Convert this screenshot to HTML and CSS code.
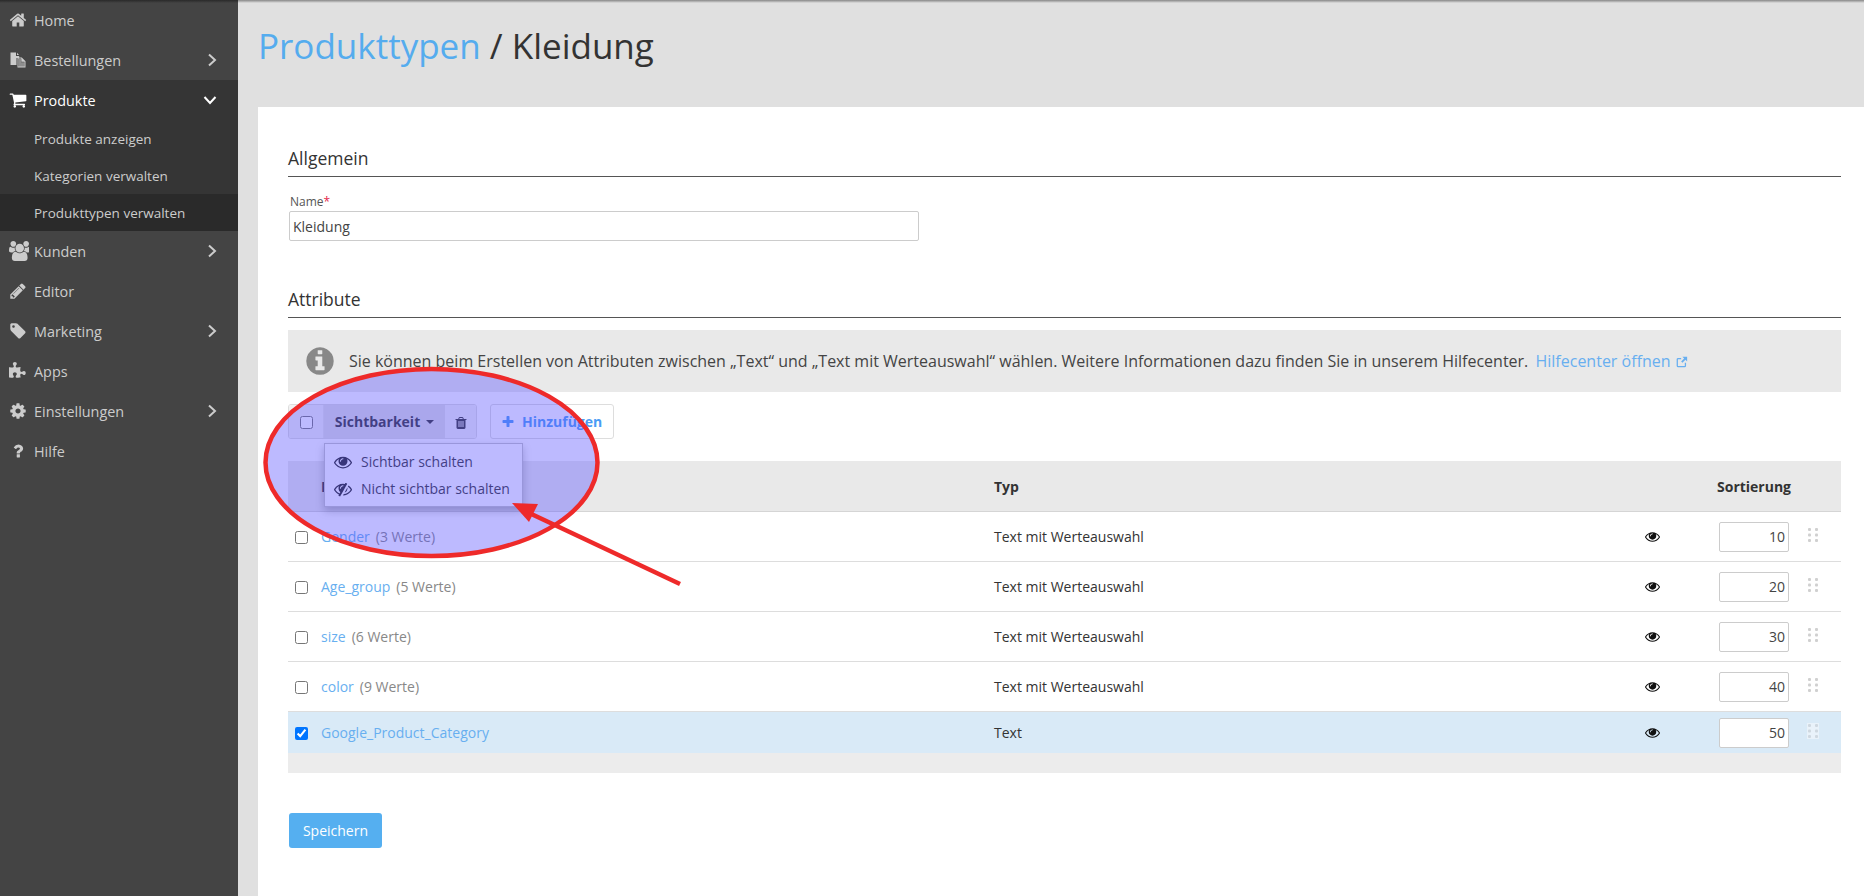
FILE: index.html
```html
<!DOCTYPE html>
<html lang="de">
<head>
<meta charset="utf-8">
<title>Produkttypen / Kleidung</title>
<link rel="stylesheet" href="styles.css">
</head>
<body>
<svg class="defs" width="0" height="0" aria-hidden="true">
  <symbol id="i-home" viewBox="0 0 1792 1792"><path d="M1472 992v480q0 26-19 45t-45 19h-384v-384h-256v384h-384q-26 0-45-19t-19-45v-480q0-1 .5-3t.5-3l575-474 575 474q1 2 1 6zm223-69l-62 74q-8 9-21 11h-3q-13 0-21-7l-692-577-692 577q-12 8-24 7-13-2-21-11l-62-74q-8-10-7-23.5t11-21.5l719-599q32-26 76-26t76 26l244 204v-195q0-14 9-23t23-9h192q14 0 23 9t9 23v408l219 182q10 8 11 21.5t-7 23.5z"/></symbol>
  <symbol id="i-files" viewBox="0 0 18 18"><path d="M1.500 1.500h5.500v3.500h3.200v2H7.500v7h-6z"/><path d="M8 1.800l2 2.300H8z"/><path fill-rule="evenodd" d="M8.500 6.500h4.300l3.700 3.700v6.300h-8zm1 1v8h6v-4.800h-3.200V7.500z"/><path d="M10 8h2v3.200h3.500V16H10z" opacity=".55"/></symbol>
  <symbol id="i-cart" viewBox="0 0 1792 1792"><path d="M704 1536q0 52-38 90t-90 38-90-38-38-90 38-90 90-38 90 38 38 90zm896 0q0 52-38 90t-90 38-90-38-38-90 38-90 90-38 90 38 38 90zm128-1088v512q0 24-16.5 42.5t-40.5 21.5l-1044 122q13 60 13 70 0 16-24 64h920q26 0 45 19t19 45-19 45-45 19h-1024q-26 0-45-19t-19-45q0-11 8-31.5t16-36 21.5-40 15.5-29.5l-177-823h-204q-26 0-45-19t-19-45 19-45 45-19h256q16 0 28.5 6.5t19.5 15.5 13 24.5 8 26 5.5 29.5 4.5 26h1201q26 0 45 19t19 45z"/></symbol>
  <symbol id="i-users" viewBox="0 0 1792 1792"><path d="M593 896q-162 5-265 128h-134q-82 0-138-40.5t-56-118.5q0-353 124-353 6 0 43.5 21t97.5 42.5 119 21.5q67 0 133-23-5 37-5 66 0 139 81 256zm1071 637q0 120-73 189.5t-194 69.5h-874q-121 0-194-69.5t-73-189.5q0-53 3.5-103.5t14-109 26.5-108.5 43-97.5 62-81 85.5-53.5 111.5-20q10 0 43 21.5t73 48 107 48 135 21.5 135-21.5 107-48 73-48 43-21.5q61 0 111.5 20t85.5 53.5 62 81 43 97.5 26.5 108.5 14 109 3.5 103.5zm-1024-1277q0 106-75 181t-181 75-181-75-75-181 75-181 181-75 181 75 75 181zm704 384q0 159-112.5 271.5t-271.5 112.5-271.5-112.5-112.5-271.5 112.5-271.5 271.5-112.5 271.5 112.5 112.5 271.5zm576 225q0 78-56 118.5t-138 40.5h-134q-103-123-265-128 81-117 81-256 0-29-5-66 66 23 133 23 59 0 119-21.5t97.5-42.5 43.5-21q124 0 124 353zm-128-609q0 106-75 181t-181 75-181-75-75-181 75-181 181-75 181 75 75 181z"/></symbol>
  <symbol id="i-pencil" viewBox="0 0 1792 1792"><path d="M491 1536l91-91-235-235-91 91v107h128v128h107zm523-928q0-22-22-22-10 0-17 7l-542 542q-7 7-7 17 0 22 22 22 10 0 17-7l542-542q7-7 7-17zm-54-192l416 416-832 832h-416v-416zm683 96q0 53-37 90l-166 166-416-416 166-165q36-38 90-38 53 0 91 38l235 234q37 39 37 91z"/></symbol>
  <symbol id="i-tag" viewBox="0 0 1792 1792"><path d="M576 448q0-53-37.5-90.5t-90.5-37.5-90.5 37.5-37.5 90.5 37.5 90.5 90.5 37.5 90.5-37.5 37.5-90.5zm1067 576q0 53-37 90l-491 492q-39 37-91 37-53 0-90-37l-715-716q-38-37-64.5-101t-26.5-117v-416q0-52 38-90t90-38h416q53 0 117 26.5t102 64.5l715 714q37 39 37 91z"/></symbol>
  <symbol id="i-puzzle" viewBox="0 0 1792 1792"><path d="M1664 1098q0 81-44.5 135t-123.5 54q-41 0-77.5-17.5t-59-38-56.5-38-71-17.5q-110 0-110 124 0 39 16 115t15 115v5q-22 0-33 1-34 3-97.5 11.5t-115.5 13.5-98 5q-61 0-103-26.5t-42-83.5q0-37 17.5-71t38-56.5 38-59 17.5-77.5q0-79-54-123.5t-135-44.5q-84 0-143 45.5t-59 127.5q0 43 15 83t33.5 64.5 33.5 53 15 50.5q0 45-46 89-37 35-117 35-95 0-245-24-9-2-27.5-4t-27.5-4l-13-2q-1 0-3-1-2 0-2-1v-1024q2 1 17.5 3.5t34 5 21.5 3.5q150 24 245 24 80 0 117-35 46-44 46-89 0-22-15-50.5t-33.5-53-33.5-64.5-15-83q0-82 59-127.5t144-45.5q80 0 134 44.5t54 123.5q0 41-17.5 77.5t-38 59-38 56.5-17.5 71q0 57 42 83.5t103 26.5q64 0 180-15t163-17v2q-1 2-3.5 17.5t-5 34-3.5 21.5q-24 150-24 245 0 80 35 117 44 46 89 46 22 0 50.5-15t53-33.5 64.5-33.5 83-15q82 0 127.5 59t45.5 143z"/></symbol>
  <symbol id="i-cog" viewBox="0 0 1792 1792"><path d="M1152 896q0-106-75-181t-181-75-181 75-75 181 75 181 181 75 181-75 75-181zm512-109v222q0 12-8 23t-20 13l-185 28q-19 54-39 91 35 50 107 138 10 12 10 25t-9 23q-27 37-99 108t-94 71q-12 0-26-9l-138-108q-44 23-91 38-16 136-29 186-7 28-36 28h-222q-14 0-24.5-8.5t-11.5-21.5l-28-184q-49-16-90-37l-141 107q-10 9-25 9-14 0-25-11-126-114-165-168-7-10-7-23 0-12 8-23 15-21 51-66.5t54-70.5q-27-50-41-99l-183-27q-13-2-21-12.5t-8-23.5v-222q0-12 8-23t19-13l186-28q14-46 39-92-40-57-107-138-10-12-10-24 0-10 9-23 26-36 98.5-107.5t94.5-71.5q13 0 26 10l138 107q44-23 91-38 16-136 29-186 7-28 36-28h222q14 0 24.5 8.5t11.5 21.5l28 184q49 16 90 37l142-107q9-9 24-9 13 0 25 10 129 119 165 170 7 8 7 22 0 12-8 23-15 21-51 66.5t-54 70.5q26 50 41 98l183 28q13 2 21 12.5t8 23.5z"/></symbol>
  <symbol id="i-question" viewBox="0 0 1792 1792"><path d="M1088 1256v240q0 16-12 28t-28 12h-240q-16 0-28-12t-12-28v-240q0-16 12-28t28-12h240q16 0 28 12t12 28zm316-600q0 54-15.5 101t-35 76.5-55 59.5-57.5 43.5-61 35.5q-41 23-68.5 65t-27.5 67q0 17-12 32.5t-28 15.5h-240q-15 0-25.5-18.5t-10.5-37.5v-45q0-83 65-156.5t143-108.5q59-27 84-56t25-76q0-42-46.5-74t-107.5-32q-65 0-108 29-35 25-107 115-13 16-31 16-12 0-25-8l-164-125q-13-10-15.5-25t5.5-28q160-266 464-266 80 0 161 31t146 83 106 127.5 41 158.5z"/></symbol>
  <symbol id="i-info" viewBox="0 0 1792 1792"><path d="M1152 1376v-160q0-14-9-23t-23-9h-96v-512q0-14-9-23t-23-9h-320q-14 0-23 9t-9 23v160q0 14 9 23t23 9h96v320h-96q-14 0-23 9t-9 23v160q0 14 9 23t23 9h448q14 0 23-9t9-23zm-128-896v-160q0-14-9-23t-23-9h-192q-14 0-23 9t-9 23v160q0 14 9 23t23 9h192q14 0 23-9t9-23zm640 416q0 209-103 385.5t-279.5 279.5-385.5 103-385.5-103-279.5-279.5-103-385.5 103-385.5 279.5-279.5 385.5-103 385.5 103 279.5 279.5 103 385.5z"/></symbol>
  <symbol id="i-trash" viewBox="0 0 1792 1792"><path d="M704 1376v-704q0-14-9-23t-23-9h-64q-14 0-23 9t-9 23v704q0 14 9 23t23 9h64q14 0 23-9t9-23zm256 0v-704q0-14-9-23t-23-9h-64q-14 0-23 9t-9 23v704q0 14 9 23t23 9h64q14 0 23-9t9-23zm256 0v-704q0-14-9-23t-23-9h-64q-14 0-23 9t-9 23v704q0 14 9 23t23 9h64q14 0 23-9t9-23zm-544-992h448l-48-117q-7-9-17-11h-317q-10 2-17 11zm928 32v64q0 14-9 23t-23 9h-96v948q0 83-47 143.5t-113 60.5h-832q-66 0-113-58.5t-47-141.5v-952h-96q-14 0-23-9t-9-23v-64q0-14 9-23t23-9h309l70-167q15-37 54-63t79-26h320q40 0 79 26t54 63l70 167h309q14 0 23 9t9 23z"/></symbol>
  <symbol id="i-plus" viewBox="0 0 1792 1792"><path d="M1600 736v192q0 40-28 68t-68 28h-416v416q0 40-28 68t-68 28h-192q-40 0-68-28t-28-68v-416h-416q-40 0-68-28t-28-68v-192q0-40 28-68t68-28h416v-416q0-40 28-68t68-28h192q40 0 68 28t28 68v416h416q40 0 68 28t28 68z"/></symbol>
  <symbol id="i-eye" viewBox="0 0 1792 1792"><path d="M1664 960q-152-236-381-353 61 104 61 225 0 185-131.5 316.5t-316.5 131.5-316.5-131.5-131.5-316.5q0-121 61-225-229 117-381 353 133 205 333.5 326.5t434.5 121.5 434.5-121.5 333.5-326.5zm-720-384q0-20-14-34t-34-14q-125 0-214.5 89.5t-89.5 214.5q0 20 14 34t34 14 34-14 14-34q0-86 61-147t147-61q20 0 34-14t14-34zm848 384q0 34-20 69-140 230-376.5 368.5t-499.5 138.5-499.5-139-376.5-368q-20-35-20-69t20-69q140-229 376.5-368t499.5-139 499.5 139 376.5 368q20 35 20 69z"/></symbol>
  <symbol id="i-eye-slash" viewBox="0 0 1792 1792"><path d="M555 1335l78-141q-87-63-136-159t-49-203q0-121 61-225-229 117-381 353 167 258 427 375zm389-759q0-20-14-34t-34-14q-125 0-214.5 89.5t-89.5 214.5q0 20 14 34t34 14 34-14 14-34q0-86 61-147t147-61q20 0 34-14t14-34zm363-191q0 7-1 9-106 189-316 567t-315 566l-49 89q-10 16-28 16-12 0-134-70-16-10-16-28 0-12 44-87-143-65-263.5-173t-208.5-245q-20-31-20-69t20-69q153-235 380-371t496-136q89 0 180 17l54-97q10-16 28-16 5 0 18 6t31 15.5 33 18.5 31.5 18.5 19.5 11.5q16 10 16 27zm37 447q0 139-79 253.5t-209 164.5l280-502q8 45 8 84zm448 128q0 35-20 69-39 64-109 145-150 172-347.5 267t-419.5 95l74-132q212-18 392.5-137t301.5-307q-115-179-282-294l63-112q95 64 182.5 153t144.5 184q20 34 20 69z"/></symbol>
  <symbol id="i-right" viewBox="0 0 10 14"><path d="M2 1.500 8 7 2 12.500" fill="none" stroke="currentColor" stroke-width="2"/></symbol>
  <symbol id="i-down" viewBox="0 0 14 10"><path d="M1.500 2 7 8l5.500-6" fill="none" stroke="currentColor" stroke-width="2"/></symbol>
  <symbol id="i-ext" viewBox="0 0 14 14"><path d="M11 8v3.500a1 1 0 0 1-1 1H2.500a1 1 0 0 1-1-1V4a1 1 0 0 1 1-1H6" fill="none" stroke="currentColor" stroke-width="1.500"/><path d="M7.500 1H13v5.500l-2-2-3.500 3.500-1.500-1.500 3.500-3.500z"/></symbol>
  <symbol id="i-drag" viewBox="0 0 10 14"><g><rect x="0" y="0" width="3" height="3" rx="1"/><rect x="7" y="0" width="3" height="3" rx="1"/><rect x="0" y="5.500" width="3" height="3" rx="1"/><rect x="7" y="5.500" width="3" height="3" rx="1"/><rect x="0" y="11" width="3" height="3" rx="1"/><rect x="7" y="11" width="3" height="3" rx="1"/></g></symbol>
</svg>

<div class="app">
  <nav class="sidebar">
    <a class="nav-item"><svg class="nav-icon"><use href="#i-home"/></svg><span>Home</span></a>
    <a class="nav-item"><svg class="nav-icon"><use href="#i-files"/></svg><span>Bestellungen</span><svg class="chev"><use href="#i-right"/></svg></a>
    <div class="nav-group">
      <a class="nav-item nav-open"><svg class="nav-icon"><use href="#i-cart"/></svg><span>Produkte</span><svg class="chev-down"><use href="#i-down"/></svg></a>
      <a class="nav-sub">Produkte anzeigen</a>
      <a class="nav-sub">Kategorien verwalten</a>
      <a class="nav-sub nav-current">Produkttypen verwalten</a>
    </div>
    <a class="nav-item"><svg class="nav-icon nav-icon-wide"><use href="#i-users"/></svg><span>Kunden</span><svg class="chev"><use href="#i-right"/></svg></a>
    <a class="nav-item"><svg class="nav-icon"><use href="#i-pencil"/></svg><span>Editor</span></a>
    <a class="nav-item"><svg class="nav-icon"><use href="#i-tag"/></svg><span>Marketing</span><svg class="chev"><use href="#i-right"/></svg></a>
    <a class="nav-item"><svg class="nav-icon"><use href="#i-puzzle"/></svg><span>Apps</span></a>
    <a class="nav-item"><svg class="nav-icon"><use href="#i-cog"/></svg><span>Einstellungen</span><svg class="chev"><use href="#i-right"/></svg></a>
    <a class="nav-item"><svg class="nav-icon"><use href="#i-question"/></svg><span>Hilfe</span></a>
  </nav>

  <main class="main">
    <header class="page-head">
      <h1 class="page-title"><a class="crumb">Produkttypen</a> / Kleidung</h1>
    </header>

    <section class="card">
      <h2 class="section-title">Allgemein</h2>
      <div class="field">
        <label class="field-label" for="name">Name<span class="req">*</span></label>
        <input class="field-input" id="name" type="text" value="Kleidung">
      </div>

      <h2 class="section-title section-second">Attribute</h2>
      <div class="info-box">
        <svg class="info-icon"><use href="#i-info"/></svg>
        <p class="info-text">Sie können beim Erstellen von Attributen zwischen „Text“ und „Text mit Werteauswahl“ wählen. Weitere Informationen dazu finden Sie in unserem Hilfecenter. <a class="info-link">Hilfecenter öffnen<svg class="ext-icon"><use href="#i-ext"/></svg></a></p>
      </div>

      <div class="toolbar">
        <div class="btn-group">
          <span class="seg seg-check"><input class="check check-tool" type="checkbox"></span>
          <span class="seg seg-drop">Sichtbarkeit<i class="caret"></i></span>
          <span class="seg seg-trash"><svg class="trash-icon"><use href="#i-trash"/></svg></span>
        </div>
        <button class="btn-add" type="button"><svg class="plus-icon"><use href="#i-plus"/></svg>Hinzufügen</button>
        <ul class="dropdown">
          <li class="drop-item"><svg class="drop-icon"><use href="#i-eye"/></svg>Sichtbar schalten</li>
          <li class="drop-item"><svg class="drop-icon"><use href="#i-eye-slash"/></svg>Nicht sichtbar schalten</li>
        </ul>
      </div>

      <table class="attr-table">
        <colgroup><col class="c-check"><col class="c-name"><col class="c-type"><col class="c-eye"><col class="c-sort"></colgroup>
        <thead>
          <tr><th></th><th>Name</th><th>Typ</th><th></th><th class="th-sort">Sortierung</th></tr>
        </thead>
        <tbody>
          <tr>
            <td class="td-check"><input class="check" type="checkbox"></td>
            <td><a class="attr-link">Gender</a><span class="attr-count">(3 Werte)</span></td>
            <td>Text mit Werteauswahl</td>
            <td class="td-eye"><svg class="eye-icon"><use href="#i-eye"/></svg></td>
            <td class="td-sort"><input class="sort-input" type="text" value="10"><svg class="drag-icon"><use href="#i-drag"/></svg></td>
          </tr>
          <tr>
            <td class="td-check"><input class="check" type="checkbox"></td>
            <td><a class="attr-link">Age_group</a><span class="attr-count">(5 Werte)</span></td>
            <td>Text mit Werteauswahl</td>
            <td class="td-eye"><svg class="eye-icon"><use href="#i-eye"/></svg></td>
            <td class="td-sort"><input class="sort-input" type="text" value="20"><svg class="drag-icon"><use href="#i-drag"/></svg></td>
          </tr>
          <tr>
            <td class="td-check"><input class="check" type="checkbox"></td>
            <td><a class="attr-link">size</a><span class="attr-count">(6 Werte)</span></td>
            <td>Text mit Werteauswahl</td>
            <td class="td-eye"><svg class="eye-icon"><use href="#i-eye"/></svg></td>
            <td class="td-sort"><input class="sort-input" type="text" value="30"><svg class="drag-icon"><use href="#i-drag"/></svg></td>
          </tr>
          <tr>
            <td class="td-check"><input class="check" type="checkbox"></td>
            <td><a class="attr-link">color</a><span class="attr-count">(9 Werte)</span></td>
            <td>Text mit Werteauswahl</td>
            <td class="td-eye"><svg class="eye-icon"><use href="#i-eye"/></svg></td>
            <td class="td-sort"><input class="sort-input" type="text" value="40"><svg class="drag-icon"><use href="#i-drag"/></svg></td>
          </tr>
          <tr class="row-selected">
            <td class="td-check"><input class="check" type="checkbox" checked></td>
            <td><a class="attr-link">Google_Product_Category</a></td>
            <td>Text</td>
            <td class="td-eye"><svg class="eye-icon"><use href="#i-eye"/></svg></td>
            <td class="td-sort"><input class="sort-input" type="text" value="50"><svg class="drag-icon drag-selected"><use href="#i-drag"/></svg></td>
          </tr>
        </tbody>
      </table>
      <div class="table-foot"></div>

      <button class="btn-save" type="button">Speichern</button>
    </section>
  </main>
</div>

<div class="top-shade"></div>

<svg class="annotation" width="1864" height="896" viewBox="0 0 1864 896" aria-hidden="true">
  <ellipse class="anno-ellipse" cx="431.500" cy="462.500" rx="166" ry="93.500"/>
  <line class="anno-line" x1="680" y1="584" x2="525" y2="511"/>
  <polygon class="anno-head" points="512,503 538,504 529,522"/>
</svg>
</body>
</html>
```
FILE: styles.css
```css
* { box-sizing: border-box; }
html, body { margin: 0; height: 100%; }
body {
  font-family: "Open Sans", "Liberation Sans", sans-serif;
  font-size: 14px;
  color: #333;
  background: #e0e0e0;
  overflow: hidden;
}
.defs { position: absolute; }
a { text-decoration: none; }

.app { display: flex; height: 896px; }

/* Sidebar */
.sidebar { width: 238px; flex: none; background: #444; color: #ccc; }
.nav-item {
  display: flex;
  align-items: center;
  height: 40px;
  padding-left: 9px;
  font-size: 14.400px;
  color: #ccc;
}
.nav-item span { margin-left: 7px; flex: 1; }
.nav-icon { width: 18px; height: 18px; fill: #ccc; flex: none; }
.nav-icon-wide { width: 20px; height: 20px; margin-right: -2px; }
.chev { width: 10px; height: 14px; color: #ccc; margin-right: 21px; flex: none; }
.chev-down { width: 14px; height: 10px; color: #fff; margin-right: 21px; flex: none; }
.nav-group { background: #353535; }
.nav-open { color: #fff; }
.nav-open .nav-icon { fill: #fff; }
.nav-sub {
  display: flex;
  align-items: center;
  height: 37px;
  padding-left: 34px;
  font-size: 13.500px;
  color: #ccc;
}
.nav-current { background: #2a2a2a; }

/* Main */
.main { flex: 1; display: flex; flex-direction: column; min-width: 0; }
.page-head { height: 107px; flex: none; padding: 21px 0 0 20px; }
.page-title { margin: 0; font-size: 35px; font-weight: 400; line-height: 49px; color: #333; }
.crumb { color: #55acee; }
.card {
  flex: 1;
  margin-left: 20px;
  padding: 38px 23px 0 30px;
  background: #fff;
}
.section-title {
  margin: 0;
  height: 32px;
  font-size: 17.500px;
  font-weight: 400;
  line-height: 26px;
  color: #333;
  border-bottom: 1px solid #555;
}
.section-second { margin-top: 45px; }
.field { margin-top: 17px; padding-left: 1px; }
.field-label { display: block; height: 17px; font-size: 12px; line-height: 16px; padding-left: 1px; color: #555; }
.req { color: #e4254a; }
.field-input {
  display: block;
  width: 630px;
  height: 30px;
  padding: 0 3px;
  border: 1px solid #ccc;
  border-radius: 2px;
  font: 14px "Open Sans", sans-serif;
  color: #444;
  outline: none;
}

/* Info */
.info-box {
  display: flex;
  align-items: center;
  height: 62px;
  margin-top: 12px;
  padding-left: 16px;
  background: #e9e9e9;
}
.info-icon { width: 32px; height: 32px; fill: #888; flex: none; }
.info-text { margin: 0 0 0 13px; font-size: 16px; color: #444; }
.info-link { margin-left: 3px; color: #68aff0; }
.ext-icon { width: 12px; height: 12px; margin-left: 5px; fill: #68aff0; color: #68aff0; vertical-align: -1px; }

/* Toolbar */
.toolbar { position: relative; display: flex; margin-top: 12px; height: 35px; }
.btn-group { display: flex; width: 189px; border: 1px solid #ddd; border-radius: 3px; overflow: hidden; }
.seg { display: flex; align-items: center; justify-content: center; height: 100%; }
.seg-check { width: 35px; background: #f2f2f2; border-right: 1px solid #e4e4e4; }
.seg-drop { width: 121px; font-weight: 700; font-size: 14px; color: #333; background: #e0e0e0; }
.seg-trash { flex: 1; background: #f2f2f2; }
.caret {
  width: 0; height: 0;
  margin-left: 6px;
  border-left: 4px solid transparent;
  border-right: 4px solid transparent;
  border-top: 4px solid #333;
}
.trash-icon { width: 14px; height: 14px; fill: #333; margin-top: 2px; }
.btn-add {
  display: flex;
  align-items: center;
  width: 124px;
  height: 35px;
  margin-left: 13px;
  padding: 0 0 0 9.500px;
  background: #fff;
  border: 1px solid #ddd;
  border-radius: 3px;
  font: 700 14px "Open Sans", sans-serif;
  color: #4a9cf5;
}
.plus-icon { width: 14px; height: 14px; fill: #4a9cf5; margin-right: 7.500px; }
.dropdown {
  position: absolute;
  left: 36px;
  top: 39px;
  z-index: 5;
  width: 199px;
  height: 64px;
  margin: 0;
  padding: 4px 0;
  list-style: none;
  background: #fff;
  border: 1px solid #c4c4c4;
  box-shadow: 0 4px 8px rgba(0,0,0,.25);
}
.drop-item { display: flex; align-items: center; height: 27px; padding-left: 9px; font-size: 14px; color: #333; }
.drop-icon { width: 18px; height: 18px; margin-right: 9px; fill: #222; }

/* Table */
.attr-table {
  width: 100%;
  margin-top: 22px;
  border-collapse: collapse;
  table-layout: fixed;
}
.c-check { width: 33px; }
.c-name { width: 673px; }
.c-type { width: 640px; }
.c-eye { width: 36px; }
.c-sort { width: 171px; }
.attr-table th {
  height: 50px;
  padding: 2px 0 0;
  text-align: left;
  font-size: 14px;
  font-weight: 700;
  color: #333;
  background: #e9e9e9;
  border-bottom: 1px solid #d5d5d5;
}
.attr-table th.th-sort { padding-left: 47px; }
.attr-table td {
  height: 50px;
  padding: 0;
  font-size: 14px;
  color: #333;
  border-bottom: 1px solid #ddd;
  vertical-align: middle;
}
.attr-table .td-check { padding: 2px 0 0 7px; }
.check { display: block; width: 13px; height: 13px; margin: 0; }
.check-tool { margin-top: 2px; }
.attr-link { color: #68aff0; }
.attr-count { margin-left: 6px; color: #888; }
.td-eye { text-align: center; }
.eye-icon { display: block; width: 15px; height: 15px; margin: 0 auto; fill: #111; }
.attr-table .td-sort { padding: 1px 0 0 49px; }
.td-sort { white-space: nowrap; }
.sort-input {
  display: inline-block;
  width: 70px;
  height: 30px;
  padding: 0 3px;
  text-align: right;
  border: 1px solid #ccc;
  border-radius: 2px;
  font: 14px "Open Sans", sans-serif;
  color: #444;
  vertical-align: middle;
  outline: none;
}
.drag-icon { width: 10px; height: 14px; margin-left: 19px; margin-top: -4px; fill: #d0d0d0; vertical-align: middle; }
.drag-selected { fill: #cfd8e0; background: #e9f2fa; box-shadow: 0 0 0 1px #e9f2fa; }
.attr-table .row-selected td { height: 42px; background: #d9eaf7; border-bottom: 0; }
.table-foot { height: 20px; background: #ececec; }
.btn-save {
  display: block;
  width: 93px;
  height: 35px;
  margin: 40px 0 0 1px;
  padding: 0;
  border: 0;
  border-radius: 3px;
  background: #55aff0;
  color: #fff;
  font: 14px "Open Sans", sans-serif;
}

/* Overlays */
.top-shade {
  position: absolute;
  left: 0; top: 0; right: 0;
  height: 3px;
  background: linear-gradient(rgba(0,0,0,.4), rgba(0,0,0,0));
}
.annotation { position: absolute; left: 0; top: 0; z-index: 10; pointer-events: none; }
.anno-ellipse { fill: rgba(90,82,255,.4); stroke: #ee2a2a; stroke-width: 4.500; }
.anno-line { stroke: #ee2a2a; stroke-width: 4.500; }
.anno-head { fill: #ee2a2a; }
```
